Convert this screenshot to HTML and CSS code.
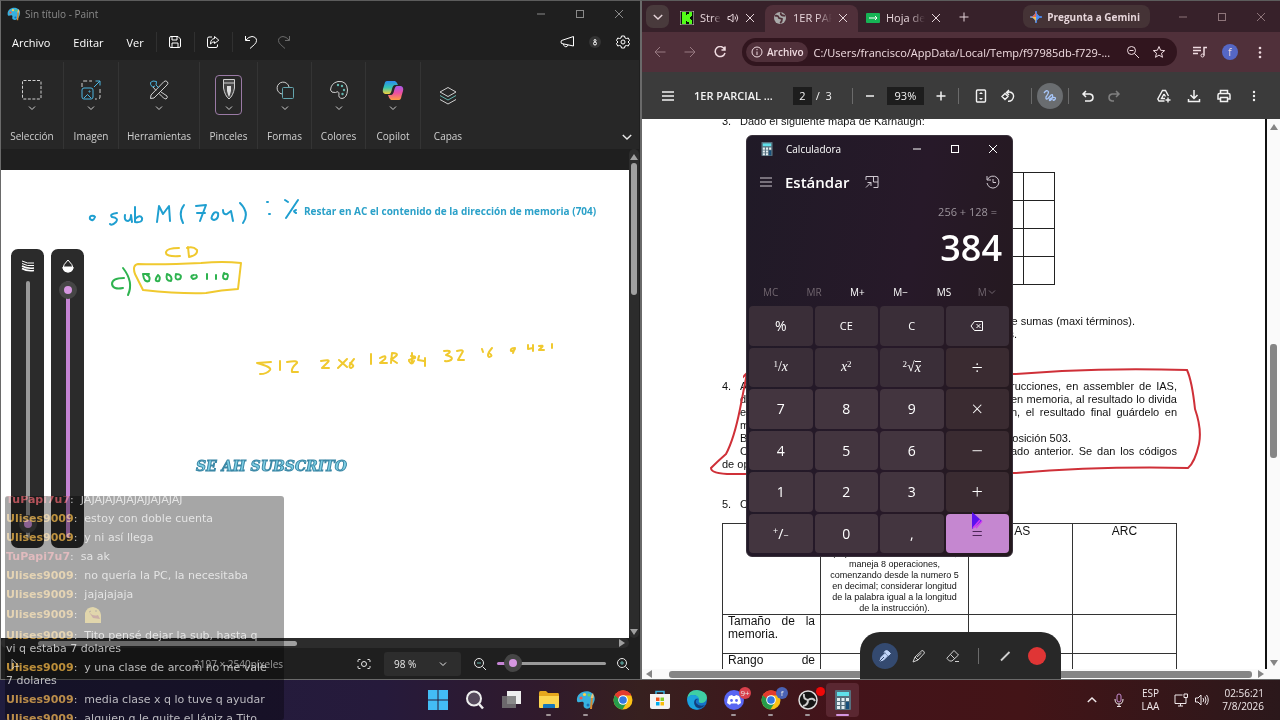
FILE: index.html
```html
<!DOCTYPE html>
<html lang="es">

<head>
  <meta charset="UTF-8" />
  <meta name="viewport" content="width=device-width, initial-scale=1.0" />
  <title>Escritorio</title>
  <link rel="stylesheet" href="styles.css">
</head>

<body>

  <!-- shared icons -->
  <svg class="defs" aria-hidden="true">
    <symbol id="chev" viewBox="0 0 10 10"><path d="M2 3.5 5 6.5 8 3.5" /></symbol>
    <symbol id="min" viewBox="0 0 10 10"><path d="M1 5H9" /></symbol>
    <symbol id="max" viewBox="0 0 10 10"><rect x="1.5" y="1.5" width="7" height="7" /></symbol>
    <symbol id="close" viewBox="0 0 10 10"><path d="M1 1 9 9M9 1 1 9" /></symbol>
    <symbol id="menu" viewBox="0 0 14 14"><path d="M1 3H13M1 7H13M1 11H13" /></symbol>
    <symbol id="palette" viewBox="0 0 20 20">
      <path d="M1 11C0 4 7 0 13 1.500 18 3 20 8 18 12 16 17 12 20 9 18 6 16 9 13 7 12 5 11 2 14 1 11Z" fill="#37b1df" />
      <circle cx="5" cy="8" r="1.600" fill="#f05a4a" /><circle cx="8.500" cy="4.500" r="1.600" fill="#ffd04a" />
      <circle cx="13" cy="5" r="1.600" fill="#5fd06c" /><circle cx="12" cy="15" r="1.500" fill="#1b6fb5" />
      <path d="M15 7 14 19 16 19 17 7Z" fill="#d98a32" /><path d="M14.500 8Q15.500 4 17 3 18 6 17.500 8Z" fill="#e9c27a" />
    </symbol>
    <symbol id="chrome" viewBox="0 0 20 20">
      <circle cx="10" cy="10" r="9.500" fill="#fbc116" />
      <path d="M10 10 1.800 5.200A9.500 9.500 0 0 1 18.300 5.300H10Z" fill="#e33b2e" />
      <path d="M1.800 5.200A9.500 9.500 0 0 0 9.500 19.500L13.900 12.200 10 10Z" fill="#269b4a" />
      <path d="M1.800 5.200 6 12 10 6Z" fill="#269b4a" />
      <path d="M1.800 5.200A9.500 9.500 0 0 1 18.300 5.300H10A5 5 0 0 0 5.500 8.500Z" fill="#e33b2e" />
      <circle cx="10" cy="10" r="4.800" fill="#fff" /><circle cx="10" cy="10" r="3.800" fill="#3478e0" />
    </symbol>
    <symbol id="calc" viewBox="0 0 18 20">
      <rect x="1" width="16" height="20" rx="1" fill="#57707e" />
      <rect x="3" y="2" width="12" height="4" fill="#5fe0ea" />
      <path d="M3 8H6V11H3ZM7.500 8H10.500V11H7.500ZM12 8H15V11H12ZM3 12H6V15H3ZM7.500 12H10.500V15H7.500ZM3 16H6V19H3ZM7.500 16H10.500V19H7.500Z" fill="#e4eef2" />
      <path d="M12 12H15V19H12Z" fill="#17507c" />
    </symbol>
  </svg>

  <div class="windows">

    <!-- Paint -->
    <section class="paint">
      <header class="paint-title">
        <svg class="i14"><use href="#palette" /></svg>
        <span>Sin título - Paint</span>
        <div class="win-btns">
          <button aria-label="Minimizar"><svg class="i10"><use href="#min" /></svg></button>
          <button aria-label="Maximizar"><svg class="i10"><use href="#max" /></svg></button>
          <button aria-label="Cerrar"><svg class="i10"><use href="#close" /></svg></button>
        </div>
      </header>

      <nav class="paint-menu">
        <button>Archivo</button>
        <button>Editar</button>
        <button>Ver</button>
        <button class="tool" aria-label="Guardar"><svg class="i14" viewBox="0 0 14 14"><path d="M1.500 3Q1.500 1.500 3 1.500H10L12.500 4V11Q12.500 12.500 11 12.500H3Q1.500 12.500 1.500 11ZM4 1.500V5H9V1.500M4 12.500V8H10V12.500" /></svg></button>
        <button class="tool" aria-label="Compartir"><svg class="i14" viewBox="0 0 14 14"><path d="M6 2H3Q1.500 2 1.500 3.500V11Q1.500 12.500 3 12.500H10Q11.500 12.500 11.500 11V9.500M8.500 1.500 12.800 5.200 8.500 8.500V6.800Q6 6.800 4.500 9 4.500 4 8.500 3.500Z" /></svg></button>
        <button class="tool undo" aria-label="Deshacer"><svg class="i14" viewBox="0 0 14 14"><path d="M1.500 1V5.500H6M1.800 5.200Q5 1.500 8 1.500 12.500 2 12.500 5.500 12.500 7.500 10.500 9.500L6 13.500" /></svg></button>
        <button class="dim" aria-label="Rehacer"><svg class="i14" viewBox="0 0 14 14"><path d="M12.500 1V5.500H8M12.200 5.200Q9 1.500 6 1.500 1.500 2 1.500 5.500 1.500 7.500 3.500 9.500L8 13.500" /></svg></button>
        <div class="menu-right">
          <button aria-label="Comentarios"><svg class="i14" viewBox="0 0 14 14"><path d="M13.500 1.500V11L1.500 8.500Q.5 7 1.500 5.500ZM3.500 9Q4 12.500 7 11.500L8 10" /></svg></button>
          <button aria-label="Cuenta" class="account"><svg class="i10" viewBox="0 0 10 10"><circle cx="5" cy="3.500" r="1" /><circle cx="5" cy="6.500" r="1.500" /></svg></button>
          <button aria-label="Configuración"><svg class="i14" viewBox="0 0 14 14"><circle cx="7" cy="7" r="2" /><path d="M5.500 1H8.500L9 3 10.500 3.500 12.300 3 13.500 5.500 12 7 13.500 8.500 12.300 11 10.500 10.500 9 11 8.500 13H5.500L5 11 3.500 10.500 1.700 11 .5 8.500 2 7 .5 5.500 1.700 3 3.500 3.500 5 3Z" /></svg></button>
        </div>
      </nav>

      <div class="ribbon">
        <button class="group">
          <svg class="i24" viewBox="0 0 24 24"><rect x="2.500" y="2.500" width="18.500" height="18.500" rx="1" stroke-dasharray="3 1.500" /></svg>
          <svg class="i10"><use href="#chev" /></svg>
          <span>Selección</span>
        </button>
        <button class="group">
          <svg class="i24" viewBox="0 0 24 24"><path d="M3 9V5Q3 3 5 3H13M21 11V19Q21 21 19 21H16" stroke-dasharray="4 2" /><g stroke="#4cb5e0"><rect x="3" y="10" width="11" height="11" rx="2" /><path d="M5 20 8.500 16.500 12 20M15 9 21 3M16.500 3H21V7.500" /><circle cx="10.500" cy="13.500" r=".6" /></g></svg>
          <svg class="i10"><use href="#chev" /></svg>
          <span>Imagen</span>
        </button>
        <button class="group">
          <svg class="i24" viewBox="0 0 24 24"><path d="M17 3.500Q19 2 20.500 4 21.500 5.500 20 7L7 20 3.500 20.500 4 17ZM14 14 20 18Q21 20 19 21 17 21 12 15.500M9 12.500 6 9" /><path d="M3.500 4.500 6 3 9.500 3.500 9 7 12 10M3.500 4.500Q3 7 5.500 9L8 8" stroke="#4cb5e0" /></svg>
          <svg class="i10"><use href="#chev" /></svg>
          <span>Herramientas</span>
        </button>
        <button class="group brush">
          <span class="brush-box">
            <svg class="i24" viewBox="0 0 24 24"><path d="M6.500 1.500H17.500V10Q16 18 12 21 8 18 6.500 10Z" fill="#454545" /><path d="M6.500 5H17.500" /><path d="M10 8H14V13Q13 17 12 19 11 17 10 13Z" fill="#ddd" stroke="none" /></svg>
            <svg class="i10"><use href="#chev" /></svg>
          </span>
          <span>Pinceles</span>
        </button>
        <button class="group">
          <svg class="i24" viewBox="0 0 24 24"><path d="M9 16A6 6 0 1 1 16 9" /><rect x="9.500" y="9.500" width="11" height="11" rx="1" stroke="#63a5ae" /></svg>
          <svg class="i10"><use href="#chev" /></svg>
          <span>Formas</span>
        </button>
        <button class="group">
          <svg class="i24" viewBox="0 0 24 24"><path d="M3.500 12Q4 5 11 3.500 20 2.500 20.500 12 20 20 15 20.500 11 20 12 16 12 12.500 8.500 14.500 4 15 3.500 12Z" /><g fill="#63b5ae" stroke="none"><circle cx="11" cy="7" r="1.200" /><circle cx="15" cy="8" r="1.200" /><circle cx="17" cy="12" r="1.200" /><circle cx="15.500" cy="16" r="1.200" /></g></svg>
          <svg class="i10"><use href="#chev" /></svg>
          <span>Colores</span>
        </button>
        <button class="group">
          <svg class="i24" viewBox="0 0 24 24">
            <defs>
              <linearGradient id="cp1" x1="0" y1="0" x2="0" y2="1"><stop offset="0" stop-color="#2a8cf0" /><stop offset=".5" stop-color="#35c5b0" /><stop offset="1" stop-color="#f4d03a" /></linearGradient>
              <linearGradient id="cp2" x1="0" y1="0" x2="0" y2="1"><stop offset="0" stop-color="#a65ae8" /><stop offset=".5" stop-color="#ee4fa0" /><stop offset="1" stop-color="#ff9c42" /></linearGradient>
            </defs>
            <path d="M6 3H14Q16 4 17 7H14Q12 7 11 11 10 16 8 16H4Q1 15 2 11L3.500 6Q4 3 6 3Z" fill="url(#cp1)" stroke="none" />
            <path d="M18 22H10Q8 21 7 17H10Q12 17 13 13 14 8 16 8H20Q23 9 22 13L20.500 18Q20 22 18 22Z" fill="url(#cp2)" stroke="none" />
          </svg>
          <svg class="i10"><use href="#chev" /></svg>
          <span>Copilot</span>
        </button>
        <button class="group layers">
          <svg class="i24" viewBox="0 0 24 24"><path d="M12 3.500 20 8 12 12.500 4 8ZM4 15.500 12 20 20 15.500" /><path d="M4 11.500 12 16 20 11.500" stroke="#63b5ae" /></svg>
          <span>Capas</span>
        </button>
        <button class="ribbon-toggle" aria-label="Contraer"><svg class="i14"><use href="#chev" /></svg></button>
      </div>

      <div class="workspace">
        <div class="canvas">
          <!-- freehand ink -->
          <svg class="ink" viewBox="0 170 628 468" aria-label="Trazos a mano">
            <g stroke="#1f9fd0">
              <path d="M93 216Q88 215 89 219 92 222 94 217ZM116 213Q108 214 111 217 118 218 115 222 111 226 109 224M124 215Q123 221 127 221 130 220 130 215L131 222M134 207 134 222Q142 223 141 218 139 214 134 219M156 222 158 206 162 214 168 206 169 221M183 205Q177 213 182 223M195 206 205 205 199 221M196 213H204M213 213Q208 219 213 220 218 219 217 213 214 211 212 214M222 210Q222 215 226 214L230 211M230 211 232 221M239 203Q249 213 242 223M266 202H267M268 214H269M284 200 287 202M297 200 285 218M295 210Q291 211 295 213" />
            </g>
            <g stroke="#f0c92f">
              <path d="M178 248Q166 248 165 252 164 257 179 256M187 247 188 257Q197 255 196 250 192 246 186 248M137 264Q160 265 200 263 222 261 240 263L237 289Q220 290 205 293 180 294 142 290L134 274Q131 265 137 264Z" />
              <path d="M270 362 256 363Q271 367 269 370 266 374 259 374M279 361V370M286 362Q297 360 296 363 290 368 291 372H297M320 361Q330 359 327 362L321 368H328M338 360 346 367M346 359 337 368M353 359Q346 367 350 368 355 366 349 363M370 354V364M379 358Q386 354 384 359L379 363H386M390 363 391 353Q398 353 395 356 392 359 390 359L396 363M411 353 411 363M408 361Q411 366 413 361M410 356Q415 356 414 358L408 360M418 356 417 360 423 361M424 358V366M443 351Q451 350 448 353L445 355Q453 357 450 360 446 362 444 361M456 351Q464 349 461 353L457 360H463M481 349 482 352M491 348Q485 355 488 357 493 356 488 353M514 348Q509 348 510 351 514 351 514 348L512 353M527 345V349L532 348M532 345V351M538 346Q543 345 541 347L538 350H543M551 344V348" />
            </g>
            <path stroke="#2eb34f" d="M123 278Q111 278 111 284 112 290 122 288M122 268Q133 282 127 295M142 274H148M142 274Q143 283 148 281 150 277 146 275M157 275Q152 282 158 281 160 277 157 275M166 274Q164 281 170 281 172 276 166 274M175 274Q173 281 179 279 182 274 175 274M193 275Q188 276 192 279 198 278 195 275M206 274V279M215 275V279M223 273Q220 280 226 279 229 273 223 274Z" />
          </svg>
          <p class="note">Restar en AC el contenido de la dirección de memoria (704)</p>
          <p class="subscribed">SE AH SUBSCRITO</p>
          <div class="panel size">
            <svg class="i14" viewBox="0 0 14 14"><path d="M1 2Q6 5 13 4M1 4.500Q6 7.500 13 6.500" /><path d="M1 7Q6 10 13 9M1 9.500Q6 12.500 13 11.500" stroke-width="1.600" /></svg>
            <input type="range" aria-label="Tamaño" min="0" max="100" value="2">
          </div>
          <div class="panel opacity">
            <svg class="i14" viewBox="0 0 14 14"><path d="M7 1Q2 6 2 9 3 13 7 13 11 13 12 9 12 6 7 1Z" /><path d="M2 8H12Q12 13 7 13 2 13 2 8Z" fill="#fff" /></svg>
            <input type="range" aria-label="Opacidad" min="0" max="100" value="100">
          </div>
        </div>
        <div class="vbar dark"><i class="up"></i><b></b><i class="down"></i></div>
      </div>
      <div class="hbar dark"><b></b><i class="right"></i></div>

      <footer class="status">
        <svg class="i14 pointer" viewBox="0 0 14 14"><path d="M4 2V12L6.500 9.500H11Z" /></svg>
        <span class="dims">2197 × 2540píxeles</span>
        <button aria-label="Ajustar a la ventana"><svg class="i14" viewBox="0 0 14 14"><circle cx="7" cy="7" r="2.500" /><path d="M1 5V3.500Q1 2.500 2 2.500H3.500M10.500 2.500H12Q13 2.500 13 3.500V5M13 9V10.500Q13 11.500 12 11.500H10.500M3.500 11.500H2Q1 11.500 1 10.500V9" /></svg></button>
        <label class="zoom-pick"><select aria-label="Zoom"><option>98 %</option></select><svg class="i10"><use href="#chev" /></svg></label>
        <button aria-label="Alejar"><svg class="i14" viewBox="0 0 14 14"><circle cx="6" cy="6" r="4.500" /><path d="M9.500 9.500 13 13" /><path d="M4 6H8" stroke="#63b5ae" /></svg></button>
        <input class="zoom" type="range" aria-label="Nivel de zoom" min="0" max="100" value="8">
        <button aria-label="Acercar"><svg class="i14" viewBox="0 0 14 14"><circle cx="6" cy="6" r="4.500" /><path d="M9.500 9.500 13 13" /><path d="M4 6H8M6 4V8" stroke="#63b5ae" /></svg></button>
      </footer>
    </section>

    <!-- Chrome -->
    <section class="browser">
      <header class="tabs">
        <button class="tab-search" aria-label="Buscar pestañas"><svg class="i14"><use href="#chev" /></svg></button>
        <div class="tab">
          <svg class="i14" viewBox="0 0 14 14"><rect width="14" height="14" fill="#061006" /><path d="M2 1H6V4H7V3H9V1H12V5H11V6H10V8H11V9H12V13H9V11H7V10H6V13H2Z" fill="#53fc18" stroke="none" /></svg>
          <span>Stre</span>
          <svg class="i12" viewBox="0 0 12 12"><path d="M1 4.500H3L6 2V10L3 7.500H1ZM8 4.500Q9 6 8 7.500M9.500 2.500Q12 6 9.500 9.500" /></svg>
          <button aria-label="Cerrar pestaña"><svg class="i10"><use href="#close" /></svg></button>
        </div>
        <div class="tab active">
          <svg class="i14" viewBox="0 0 14 14"><circle cx="7" cy="7" r="6" fill="#aaa" stroke="none" /><path d="M2 5Q5 4 6 7L9 8Q9 11 7 12M8 1.500Q7 4 10 4.500L12 5" stroke="#4f2f37" stroke-width="1.800" /></svg>
          <span>1ER PAR</span>
          <button aria-label="Cerrar pestaña"><svg class="i10"><use href="#close" /></svg></button>
        </div>
        <div class="tab">
          <svg class="i14" viewBox="0 0 14 14"><rect y="2" width="14" height="10" rx="1" fill="#16b455" stroke="none" /><path d="M3 7H11M9 5 11 7 9 9" stroke="#fff" /></svg>
          <span>Hoja de</span>
          <button aria-label="Cerrar pestaña"><svg class="i10"><use href="#close" /></svg></button>
        </div>
        <button class="new-tab" aria-label="Nueva pestaña"><svg class="i10" viewBox="0 0 10 10"><path d="M5 .5V9.500M.5 5H9.500" /></svg></button>
        <button class="gemini"><svg class="i14" viewBox="0 0 14 14"><path d="M7 1Q7.500 6.500 13 7 7.500 7.500 7 13 6.500 7.500 1 7 6.500 6.500 7 1Z" fill="#4c8df6" stroke="#4c8df6" /><path d="M7 1Q7.300 6 7 7H1Q6.500 6.500 7 1Z" fill="#ed6a4e" stroke="none" /><path d="M1 7H7V13Q6.500 7.500 1 7Z" fill="#f2c14e" stroke="none" /></svg>Pregunta a Gemini</button>
        <div class="win-btns">
          <button aria-label="Minimizar"><svg class="i10"><use href="#min" /></svg></button>
          <button aria-label="Maximizar"><svg class="i10"><use href="#max" /></svg></button>
          <button aria-label="Cerrar"><svg class="i10"><use href="#close" /></svg></button>
        </div>
      </header>

      <div class="address">
        <button class="dim" aria-label="Atrás"><svg class="i12" viewBox="0 0 12 12"><path d="M11.500 6H1M6 1 1 6 6 11" /></svg></button>
        <button class="dim" aria-label="Adelante"><svg class="i12" viewBox="0 0 12 12"><path d="M.5 6H11M6 1 11 6 6 11" /></svg></button>
        <button aria-label="Recargar"><svg class="i12" viewBox="0 0 12 12"><path d="M10.500 3A5 5 0 1 0 11 7M11 .5V4H7.500" stroke-width="1.500" /></svg></button>
        <div class="omnibox">
          <button class="chip"><svg class="i12" viewBox="0 0 12 12"><circle cx="6" cy="6" r="5" /><path d="M6 5.500V9M6 3V4.200" /></svg>Archivo</button>
          <input type="text" aria-label="Dirección" value="C:/Users/francisco/AppData/Local/Temp/f97985db-f729-...">
          <button aria-label="Zoom"><svg class="i14" viewBox="0 0 14 14"><circle cx="5.500" cy="5.500" r="4" /><path d="M8.500 8.500 13 13M3.500 5.500H7.500" /></svg></button>
          <button class="star" aria-label="Favorito"><svg class="i14" viewBox="0 0 14 14"><path d="M7 1.500 8.600 5.300 12.700 5.600 9.500 8.200 10.500 12.300 7 10.100 3.500 12.300 4.500 8.200 1.300 5.600 5.400 5.300Z" /></svg></button>
        </div>
        <button aria-label="Medios"><svg class="i14" viewBox="0 0 14 14"><path d="M0 2.500H8M0 5.500H8M0 8.500H5M11 10.500V2.500H14" stroke-width="1.500" /><circle cx="9.500" cy="10.500" r="1.500" /></svg></button>
        <button class="avatar">f</button>
        <button aria-label="Más"><svg class="i14 dots" viewBox="0 0 14 14"><circle cx="7" cy="3" r="1.300" /><circle cx="7" cy="7.500" r="1.300" /><circle cx="7" cy="12" r="1.300" /></svg></button>
      </div>

      <div class="pdf-bar">
        <button aria-label="Menú"><svg class="i14 bold"><use href="#menu" /></svg></button>
        <strong>1ER PARCIAL ...</strong>
        <input class="page-no" type="text" aria-label="Página" value="2">
        <span class="pages">/&nbsp; 3</span>
        <i class="sep"></i>
        <button aria-label="Reducir"><svg class="i10 bold"><use href="#min" /></svg></button>
        <input class="pct" type="text" aria-label="Zoom" value="93%">
        <button aria-label="Ampliar"><svg class="i10 bold" viewBox="0 0 10 10"><path d="M5 .5V9.500M.5 5H9.500" /></svg></button>
        <i class="sep"></i>
        <button class="fit" aria-label="Ajustar"><svg class="i14" viewBox="0 0 14 14"><rect x="2.500" y="1" width="9" height="12" rx="1" stroke-width="1.400" /><path d="M5 5 7 3 9 5ZM5 9 7 11 9 9Z" fill="#f2f2f2" stroke="none" /></svg></button>
        <button class="rotate" aria-label="Girar"><svg class="i14" viewBox="0 0 14 14"><path d="M4 4.500 7 7.500 4 10.500 1 7.500ZM6 3.500Q10 2 12 5 13.500 8 11 11 9.500 12.500 7 12.300M8 1 5.500 3.500 8 6" stroke-width="1.400" /></svg></button>
        <i class="sep"></i>
        <button class="draw" aria-label="Dibujar"><svg class="i14" viewBox="0 0 14 14"><path d="M1 4Q4 0 5.500 3 5.500 5 3 8 2.500 11 5 9.500L8 6Q10 4.500 9.500 8 8 12 6.500 11.500 6 9.500 10 8.500 13.500 8 12 10.500 10 12.500 10 10" stroke="#a8c7fa" stroke-width="1.300" /></svg></button>
        <i class="sep"></i>
        <button class="u" aria-label="Deshacer"><svg class="i14" viewBox="0 0 14 14"><path d="M5 2 2 5 5 8M2 5H9Q12 5.500 12 8.500 12 11.500 9 12H4" stroke-width="1.500" /></svg></button>
        <button class="dim" aria-label="Rehacer"><svg class="i14" viewBox="0 0 14 14"><path d="M9 2 12 5 9 8M12 5H5Q2 5.500 2 8.500 2 11.500 5 12H7" stroke-width="1.500" /></svg></button>
        <div class="pdf-right">
          <button aria-label="Guardar en Drive"><svg class="i14" viewBox="0 0 14 14"><path d="M7.500 12H2L.8 10 5.500 1.500H8.500L11.500 7M7 5 4.500 9.500H8M7 5 8.500 7.500M11 8.500V13.500M8.500 11H13.500" stroke-width="1.400" /></svg></button>
          <button aria-label="Descargar"><svg class="i14" viewBox="0 0 14 14"><path d="M7 1V9M3.500 6 7 9.500 10.500 6M1.500 10V12.500H12.500V10" stroke-width="1.500" /></svg></button>
          <button aria-label="Imprimir"><svg class="i14" viewBox="0 0 14 14"><path d="M3.500 4.500V1.500H10.500V4.500M3.500 10H1V6Q1 4.500 2.500 4.500H11.500Q13 4.500 13 6V10H10.500M3.500 8.500H10.500V12.500H3.500Z" stroke-width="1.500" /></svg></button>
          <button aria-label="Más"><svg class="i14 dots" viewBox="0 0 14 14"><circle cx="7" cy="3" r="1.200" /><circle cx="7" cy="7" r="1.200" /><circle cx="7" cy="11" r="1.200" /></svg></button>
        </div>
      </div>

      <div class="viewer">
        <div class="page">
          <p class="line"><b>3.</b><span>Dado el siguiente mapa de Karnaugh:</span></p>
          <table class="karnaugh">
            <tr><td></td><td></td><td></td><td></td><td></td></tr>
            <tr><td></td><td></td><td></td><td></td><td></td></tr>
            <tr><td></td><td></td><td></td><td></td><td></td></tr>
            <tr><td></td><td></td><td></td><td></td><td></td></tr>
          </table>
          <div class="sums">
            <p class="line"><em>e sumas (maxi términos).</em></p>
            <p class="line"><em class="short">s.</em></p>
          </div>
          <div class="question">
            <p class="line"><b>4.</b><span>A</span><em class="full">rucciones, en assembler de IAS,</em></p>
            <p class="line"><b></b><span>d</span><em class="full">en memoria, al resultado lo divida</em></p>
            <p class="line"><b></b><span>e</span><em class="full">n, el resultado final guárdelo en</em></p>
            <p class="line"><b></b><span>m</span></p>
            <p class="line"><b></b><span>B</span><em class="mid">osición 503.</em></p>
            <p class="line"><b></b><span>C</span><em class="full">ado anterior. Se dan los códigos</em></p>
            <p class="line">de op</p>
          </div>
          <p class="line q5"><b>5.</b><span>C</span></p>
          <table class="compare">
            <colgroup><col class="c1"><col class="c2"><col class="c3"><col class="c3"></colgroup>
            <tr class="head">
              <td></td>
              <td class="spec">(capacidad de memoria 32 GB,<br>maneja 8 operaciones,<br>comenzando desde la numero 5<br>en decimal; considerar longitud<br>de la palabra igual a la longitud<br>de la instrucción).</td>
              <td>IAS</td>
              <td>ARC</td>
            </tr>
            <tr class="mem"><th>Tamaño de la<br>memoria.</th><td></td><td></td><td></td></tr>
            <tr class="mem"><th>Rango de</th><td></td><td></td><td></td></tr>
          </table>
          <svg class="mark" viewBox="0 0 624 550"><path d="M140 255Q102 255 102 257L105 254 98 290Q92 320 84 335 76 342 69 349 69 355 90 355L150 355M320 255 374 255 420 252Q480 249 545 251 550 262 553 290 560 310 557 325 553 343 546 349 460 347 374 354H320" /></svg>
        </div>
        <div class="vbar light"><i class="up"></i><b></b><i class="down"></i></div>
      </div>
      <div class="hbar light"><i class="left"></i><b></b><i class="right"></i></div>

      <div class="annot">
        <button class="on" aria-label="Lápiz"><svg class="i14" viewBox="0 0 14 14"><path d="M2 12 3 8.500 7 4.500 9.500 7 5.500 11ZM6 3.500Q8 0 11 3L12.500 4.500 10.500 6.500 7.500 3.500" fill="#c3d7fb" stroke="#c3d7fb" /><path d="M2 12 6 8" stroke="#344a70" /></svg></button>
        <button aria-label="Resaltador"><svg class="i14" viewBox="0 0 14 14"><path d="M1 13 3 8 10 1.500Q12 1.500 12.500 4L6 11ZM3 8 6 11M5 8 9.500 4" /></svg></button>
        <button aria-label="Borrador"><svg class="i14" viewBox="0 0 14 14"><path d="M1 9 8 1.500 12.500 6 6 12H3.500L1 9.500ZM4.500 5.500 9 10M9 12.500H13" /></svg></button>
        <i class="sep"></i>
        <button aria-label="Grosor"><svg class="i14" viewBox="0 0 14 14"><path d="M3 11.500 11.500 3" stroke-width="1.800" /></svg></button>
        <button class="red" aria-label="Color"></button>
      </div>
    </section>
  </div>

  <!-- Calculator -->
  <section class="calculator">
    <header>
      <svg class="i14"><use href="#calc" /></svg>
      <span>Calculadora</span>
      <div class="win-btns">
        <button aria-label="Minimizar"><svg class="i10"><use href="#min" /></svg></button>
        <button aria-label="Maximizar"><svg class="i10"><use href="#max" /></svg></button>
        <button aria-label="Cerrar"><svg class="i10"><use href="#close" /></svg></button>
      </div>
    </header>
    <div class="mode">
      <button aria-label="Menú"><svg class="i14"><use href="#menu" /></svg></button>
      <h1>Estándar</h1>
      <button class="pin" aria-label="Mantener arriba"><svg class="i14" viewBox="0 0 14 14"><path d="M1 5V1.500H13V12.500H8.500M8.500 1.500V7H13M1 12.500 6 7.500M2.500 7.500H6V11" /></svg></button>
      <button class="history" aria-label="Historial"><svg class="i14" viewBox="0 0 14 14"><path d="M1 1V5H5M1.500 4.500A6 6 0 1 1 1 8M7 4V7.500H10" /></svg></button>
    </div>
    <p class="expr">256 + 128 =</p>
    <output>384</output>
    <div class="memory">
      <button class="off">MC</button><button class="off">MR</button><button>M+</button><button>M−</button><button>MS</button><button class="off">M<svg class="i10"><use href="#chev" /></svg></button>
    </div>
    <div class="keys">
      <button>%</button><button class="small">CE</button><button class="small">C</button><button aria-label="Borrar"><svg class="i14" viewBox="0 0 14 14"><path d="M4.500 2.500H12.500V11.500H4.500L1 7ZM6.500 5 10.500 9M10.500 5 6.500 9" /></svg></button>
      <button class="math"><sup>1</sup>/<i>x</i></button><button class="math"><i>x</i><sup>2</sup></button><button class="math"><sup>2</sup>√<i class="root">x</i></button><button class="sign">÷</button>
      <button class="num">7</button><button class="num">8</button><button class="num">9</button><button class="sign">×</button>
      <button class="num">4</button><button class="num">5</button><button class="num">6</button><button class="sign">−</button>
      <button class="num">1</button><button class="num">2</button><button class="num">3</button><button class="sign">+</button>
      <button class="num pm"><sup>+</sup>/<sub>−</sub></button><button class="num">0</button><button class="num">,</button><button class="sign equals">=</button>
    </div>
    <svg class="cursor" viewBox="0 0 12 18"><path d="M1 0 11 9 1 17Z" fill="#5a12f0" /><path d="M2 16 9 8M5 16 11 9" stroke="#d03bf0" stroke-width="1.500" /></svg>
  </section>

  <footer class="taskbar">
    <nav class="apps">
      <button aria-label="Inicio"><svg class="i20" viewBox="0 0 20 20"><path d="M0 0H9.500V9.500H0ZM10.500 0H20V9.500H10.500ZM0 10.500H9.500V20H0ZM10.500 10.500H20V20H10.500Z" fill="#43bdf5" /></svg></button>
      <button aria-label="Buscar"><svg class="i20" viewBox="0 0 20 20"><circle cx="9" cy="8.500" r="7" fill="#564a5c" stroke="#eee" stroke-width="2" /><path d="M14 14 18 18.500" stroke="#eee" stroke-width="2.500" /></svg></button>
      <button aria-label="Vista de tareas"><svg class="i20" viewBox="0 0 20 20"><path d="M5 1H19V14H5Z" fill="#eee" /><path d="M0 6H14V18H0Z" fill="#777" opacity=".85" /></svg></button>
      <button class="open" aria-label="Explorador"><svg class="i20" viewBox="0 0 20 20"><path d="M0 3Q0 1 1.500 1H7L9 3H19Q20 3 20 5V16H0Z" fill="#e5a71d" /><path d="M0 6H20V17Q20 18 19 18H1Q0 18 0 17Z" fill="#fbd651" /><path d="M4 18V15Q4 14 5 14H15Q16 14 16 15V18Z" fill="#1477bd" /></svg></button>
      <button class="open" aria-label="Paint"><svg class="i20"><use href="#palette" /></svg></button>
      <button aria-label="Chrome"><svg class="i20"><use href="#chrome" /></svg></button>
      <button aria-label="Store"><svg class="i20" viewBox="0 0 20 20"><path d="M6 5V1.500H14V5" fill="none" stroke="#37b1df" stroke-width="1.500" /><path d="M0 4H20V17Q20 19 18 19H2Q0 19 0 17Z" fill="#f3f3f3" /><path d="M6 7.500H9.500V11H6Z" fill="#f1511b" /><path d="M10.500 7.500H14V11H10.500Z" fill="#80cc28" /><path d="M6 12H9.500V15.500H6Z" fill="#00adef" /><path d="M10.500 12H14V15.500H10.500Z" fill="#fbbc09" /></svg></button>
      <button aria-label="Edge"><svg class="i20" viewBox="0 0 20 20"><circle cx="10" cy="10" r="10" fill="#1673c8" /><path d="M0 9Q1 0 10 0 20 1 20 8 19 13 14 13 11 13 12 10 11 5 6 5 2 5 0 9Z" fill="#3fcfa4" /><path d="M0 9Q2 5 6 5 11 5 12 9 7 7 7 13 8 18 13 19 3 21 1 13Z" fill="#1ca3dd" /><path d="M12 9Q8 9 9 13 12 17 18 15 14 20 9 17 6 13 8 10 10 8 12 9Z" fill="#123f7a" /></svg></button>
      <button class="open" aria-label="Discord"><svg class="i20" viewBox="0 0 20 20"><circle cx="10" cy="10" r="10" fill="#5865f2" /><path d="M5 6 8 5 9 6H11L12 5 15 6Q17 9 17 13L14 15 13 13.500H7L6 15 3 13Q3 9 5 6Z" fill="#fff" /><circle cx="7.500" cy="10.500" r="1.400" fill="#5865f2" /><circle cx="12.500" cy="10.500" r="1.400" fill="#5865f2" /></svg><span class="badge">9+</span></button>
      <button class="open" aria-label="Chrome, perfil f"><svg class="i20"><use href="#chrome" /></svg><span class="badge blue">f</span></button>
      <button class="open" aria-label="OBS"><svg class="i20" viewBox="0 0 20 20"><circle cx="10" cy="10" r="9" fill="#161616" stroke="#ddd" stroke-width="1.500" /><path d="M10 10Q5 9 6 4M10 10Q15 7 17 11M10 10Q10 15 5 16" fill="none" stroke="#ccc" stroke-width="2" /></svg><span class="badge rec"></span></button>
      <button class="open current" aria-label="Calculadora"><svg class="i20"><use href="#calc" /></svg></button>
    </nav>
    <div class="tray">
      <svg class="i14 up-chev"><use href="#chev" /></svg>
      <svg class="i14 mic" viewBox="0 0 14 14"><rect x="5" y="1" width="4" height="8" rx="2" stroke="#c58bd0" /><path d="M3 6Q3 11 7 11 11 11 11 6M7 11V13.500M5 13.500H9" /></svg>
      <span class="lang">ESP<br>LAA</span>
      <svg class="i14 net" viewBox="0 0 14 14"><path d="M8.500 2H1V10.500H12V8M4 13H9M6.500 10.500V13M10 1H13.500V4.500H10ZM12 4.500V8" /></svg>
      <svg class="i14" viewBox="0 0 14 14"><path d="M.5 5H3L6 2V12L3 9H.5ZM8 5Q9.500 7 8 9M10 3.500Q12 7 10 10.500M11.500 2Q15 7 11.500 12" /></svg>
      <time>02:56:21<br>7/8/2026</time>
    </div>
  </footer>

  <!-- stream chat overlay -->
  <aside class="chat">
    <ul>
      <li class="red"><b>TuPapi7u7</b>: &nbsp;JAJAJAJAJAJAJJAJAJAJ</li>
      <li><b>Ulises9009</b>: &nbsp;estoy con doble cuenta</li>
      <li><b>Ulises9009</b>: &nbsp;y ni así llega</li>
      <li class="red"><b>TuPapi7u7</b>: &nbsp;sa ak</li>
      <li><b>Ulises9009</b>: &nbsp;no quería la PC, la necesitaba</li>
      <li><b>Ulises9009</b>: &nbsp;jajajajaja</li>
      <li class="emote"><b>Ulises9009</b>: &nbsp;<svg viewBox="0 0 18 16"><path d="M1 16V6Q3 0 9 0 16 1 17 8V16Z" fill="#a88a10" /><path d="M5 5Q9 10 14 8L16 12 9 11Z" fill="#6a1a08" /><path d="M5 5 7 4M11 4H13" stroke="#3a2000" /></svg></li>
      <li><b>Ulises9009</b>: &nbsp;Tito pensé dejar la sub, hasta q<br>vi q estaba 7 dolares</li>
      <li><b>Ulises9009</b>: &nbsp;y una clase de arcom no me vale<br>7 dolares</li>
      <li><b>Ulises9009</b>: &nbsp;media clase x q lo tuve q ayudar</li>
      <li><b>Ulises9009</b>: &nbsp;alguien q le quite el lápiz a Tito</li>
    </ul>
  </aside>

</body>

</html>
```
FILE: styles.css
```css
* {
  box-sizing: border-box;
}

body {
  margin: 0;
  height: 100vh;
  display: flex;
  flex-direction: column;
  overflow: hidden;
  position: relative;
  font-family: "Open Sans", "Noto Sans", sans-serif;
  font-size: 10px;
  color: #e8e8e8;
  background: #1c1c1c;
}

p,
h1,
ul {
  margin: 0;
  padding: 0;
}

button,
input,
select {
  font: inherit;
  color: inherit;
  background: none;
  border: none;
  padding: 0;
  margin: 0;
}

button {
  display: flex;
  align-items: center;
  justify-content: center;
}

svg {
  display: block;
  flex: none;
  fill: none;
  stroke: currentColor;
}

.defs {
  position: absolute;
  width: 0;
  height: 0;
}

.defs symbol [fill],
.apps svg {
  stroke: none;
}

.i10 {
  width: 10px;
  height: 10px;
}

.i12 {
  width: 12px;
  height: 12px;
}

.i14 {
  width: 14px;
  height: 14px;
}

.i20 {
  width: 20px;
  height: 20px;
}

.i24 {
  width: 24px;
  height: 24px;
}

.bold {
  stroke-width: 1.5;
}

.dots {
  fill: currentColor;
  stroke: none;
}

.dim {
  color: #808080;
}

.sep {
  width: 1px;
  height: 16px;
  background: #6b6b6b;
}

.win-btns {
  display: flex;
  margin-left: auto;
}

.win-btns button {
  width: 39px;
  height: 24px;
}

.windows {
  flex: 1;
  min-height: 0;
  display: grid;
  grid-template-columns: 1fr 1fr;
}

/* ---------- Paint ---------- */
.paint,
.browser {
  display: flex;
  flex-direction: column;
  min-width: 0;
  min-height: 0;
  position: relative;
  border-top: 1px solid #5c5c5c;
  border-bottom: 1px solid #6a6a6a;
  overflow: hidden;
}

.paint {
  background: #1f1f1f;
  border-left: 1px solid #6a6a6a;
  padding-right: 1px;
}

.paint-title {
  height: 25px;
  display: flex;
  align-items: center;
  gap: 4px;
  padding: 0 1px 0 6px;
  color: #8a8a8a;
}

.paint-menu {
  height: 34px;
  display: flex;
  align-items: center;
  padding-bottom: 2px;
  font-size: 11px;
  color: #fff;
}

.paint-menu > button {
  padding: 0 12px 0 11px;
  height: 20px;
}

.paint-menu .tool {
  border-left: 1px solid #303030;
}

.paint-menu .dim {
  color: #6a6a6a;
  padding-left: 7px;
}

.menu-right {
  display: flex;
  align-items: center;
  gap: 15px;
  margin-left: auto;
  padding-right: 9px;
}

.account {
  width: 12px;
  height: 12px;
  border-radius: 50%;
  background: #343434;
}

.ribbon {
  height: 89px;
  flex: none;
  display: grid;
  grid-template-columns: 63px 55px 81px 58px 54px 54px 55px 54px 1fr;
  padding-top: 2px;
  background: #272727;
}

.group {
  flex-direction: column;
  justify-content: flex-start;
  padding-top: 16px;
  color: #d0d0d0;
  border-right: 1px solid #343434;
}

.group > span:last-child {
  margin-top: auto;
  line-height: 16px;
  margin-bottom: 5px;
}

.group svg + svg {
  margin-top: 1px;
}

.brush {
  padding-top: 13px;
}

.brush-box {
  border: 1px solid #9a7aa5;
  border-radius: 4px;
  height: 40px;
  width: 27px;
  padding-top: 2px;
  display: flex;
  flex-direction: column;
  align-items: center;
}

.layers {
  border: none;
  padding-top: 22px;
}

.ribbon-toggle {
  align-self: end;
  justify-self: end;
  margin: 0 5px 5px 0;
}

.workspace {
  flex: 1;
  min-height: 0;
  display: flex;
}

.canvas {
  flex: 1;
  margin-top: 21px;
  background: #fff;
  position: relative;
}

.ink {
  position: absolute;
  left: 0;
  top: 0;
  width: 628px;
  height: 468px;
  stroke-width: 2;
  stroke-linecap: round;
  stroke-linejoin: round;
}

.note {
  position: absolute;
  left: 303px;
  top: 34px;
  line-height: 14px;
  font-weight: bold;
  color: #2ba1c9;
  white-space: nowrap;
}

.subscribed {
  position: absolute;
  left: 195px;
  top: 286px;
  font: italic bold 14px/20px "DejaVu Serif", serif;
  color: #7fcfe4;
  -webkit-text-stroke: 1px #3a87a5;
  white-space: nowrap;
}

.panel {
  position: absolute;
  top: 79px;
  width: 33px;
  height: 299px;
  border-radius: 7px;
  background: #2b2b2b;
  display: flex;
  flex-direction: column;
  align-items: center;
  padding: 10px 0;
  gap: 8px;
  color: #fff;
}

.size {
  left: 10px;
}

.opacity {
  left: 50px;
}

.panel input {
  appearance: none;
  writing-mode: vertical-lr;
  direction: rtl;
  width: 18px;
  height: 257px;
}

.panel input::-webkit-slider-runnable-track {
  width: 4px;
  height: 100%;
  border-radius: 2px;
  background: #9a9a9a;
}

.opacity input::-webkit-slider-runnable-track {
  background: #c584d4;
}

input::-webkit-slider-thumb {
  appearance: none;
  width: 18px;
  height: 18px;
  border-radius: 50%;
  border: 5px solid #454545;
  background: #d596e0;
}

.panel input::-webkit-slider-thumb {
  margin-left: -7px;
}

/* scroll bars */
.vbar,
.hbar {
  flex: none;
  display: flex;
  align-items: center;
}

.vbar {
  flex-direction: column;
  width: 10px;
  padding: 5px 0 3px;
}

.hbar {
  height: 10px;
  padding: 0 4px;
}

.dark {
  background: #2c2c2c;
  border-radius: 5px;
  color: #a0a0a0;
}

.light {
  background: #fafafa;
  color: #858585;
}

.vbar b,
.hbar b {
  background: currentColor;
  border-radius: 3px;
}

.up,
.down {
  border-left: 4px solid transparent;
  border-right: 4px solid transparent;
}

.up {
  border-bottom: 6px solid;
}

.down {
  border-top: 6px solid;
  margin-top: auto;
}

.left,
.right {
  border-top: 4px solid transparent;
  border-bottom: 4px solid transparent;
}

.left {
  border-right: 6px solid;
}

.right {
  border-left: 6px solid;
  margin-left: auto;
}

.vbar.dark b {
  width: 6px;
  height: 132px;
  margin-top: 3px;
}

.hbar.dark {
  margin-right: 10px;
}

.hbar.dark b {
  height: 5px;
  width: 259px;
  margin-left: 33px;
}

.vbar.light {
  width: 13px;
}

.vbar.light b {
  width: 7px;
  height: 114px;
  margin-top: 214px;
}

.hbar.light {
  padding-right: 16px;
}

.hbar.light b {
  flex: 1;
  height: 7px;
  margin: 0 6px 0 17px;
}

.status {
  height: 31px;
  flex: none;
  display: flex;
  align-items: center;
  padding: 0 9px 0 7px;
}

.dims {
  margin: 0 74px 0 172px;
  white-space: nowrap;
}

.zoom-pick {
  width: 77px;
  height: 24px;
  margin: 0 12px 0 13px;
  padding: 0 13px 0 10px;
  display: flex;
  align-items: center;
  background: #2d2d2d;
  border-radius: 3px;
}

.zoom-pick select {
  flex: 1;
  appearance: none;
}

.zoom {
  appearance: none;
  flex: 1;
  margin: 0 10px;
  min-width: 0;
  height: 18px;
}

.zoom::-webkit-slider-runnable-track {
  height: 3px;
  border-radius: 2px;
  background: linear-gradient(to right, #c584d4 10%, #9a9a9a 10%);
}

.zoom::-webkit-slider-thumb {
  margin-top: -8px;
}

/* ---------- Chrome ---------- */
.browser {
  border-left: 2px solid #6a6a6a;
  background: #50303a;
}

.tabs {
  height: 31px;
  flex: none;
  display: flex;
  align-items: center;
  padding: 0 0 0 4px;
  background: #37212a;
  color: #e6d5da;
}

.tab-search {
  width: 23px;
  height: 23px;
  border-radius: 7px;
  background: #493a3c;
  margin-right: 3px;
}

.tab {
  width: 93px;
  height: 27px;
  align-self: flex-end;
  display: flex;
  align-items: center;
  gap: 6px;
  padding: 0 10px 2px 8px;
}

.tab span {
  flex: 1;
  min-width: 0;
  overflow: hidden;
  white-space: nowrap;
  font-size: 11px;
  mask-image: linear-gradient(to right, #000 60%, transparent);
}

.tab.active {
  background: #50303a;
  border-radius: 8px 8px 0 0;
}

.new-tab {
  margin-left: 8px;
  margin-right: auto;
}

.gemini {
  height: 23px;
  padding: 0 10px 0 6px;
  gap: 4px;
  border-radius: 8px;
  background: #453336;
  font-weight: bold;
  white-space: nowrap;
}

.tabs .win-btns {
  margin-left: 13px;
  color: #8d7479;
}

.address {
  height: 40px;
  flex: none;
  display: flex;
  align-items: center;
  padding: 0 13px 0 12px;
  gap: 18px;
  color: #f0dce1;
}

.address .dim {
  color: #987a82;
}

.omnibox {
  flex: 1;
  min-width: 0;
  height: 28px;
  display: flex;
  align-items: center;
  gap: 10px;
  padding: 0 11px 0 4px;
  margin: 0 -2px;
  border-radius: 14px;
  background: #31151e;
}

.omnibox input {
  flex: 1;
  min-width: 0;
  font-size: 11px;
  margin-left: -5px;
}

.omnibox .star {
  margin-left: 2px;
}

.chip {
  height: 20px;
  padding: 0 5px;
  gap: 4px;
  border-radius: 10px;
  background: #50303a;
  font-weight: 600;
}

.avatar {
  width: 16px;
  height: 16px;
  border-radius: 50%;
  background: #5567c5;
  margin: 0 -3px;
}

.pdf-bar {
  height: 47px;
  flex: none;
  display: flex;
  align-items: center;
  padding: 0 19px;
  background: #3b3b3b;
  color: #f2f2f2;
  font-size: 11px;
}

.pdf-bar strong {
  font-weight: 600;
  margin: 0 20px 0 19px;
  white-space: nowrap;
}

.page-no,
.pct {
  height: 18px;
  background: #1d1d1d;
  text-align: center;
}

.page-no {
  width: 19px;
}

.pages {
  margin: 0 20px 0 4px;
}

.pct {
  width: 37px;
}

.pdf-bar .sep + button {
  margin-left: 12px;
}

.pdf-bar .pct {
  margin: 0 12px;
}

.pdf-bar .pct + button {
  margin-right: 12px;
}

.pdf-bar .sep + .fit {
  margin-left: 15px;
}

.pdf-bar .rotate {
  margin: 0 16px 0 13px;
}

.pdf-bar .sep + .draw {
  width: 26px;
  height: 26px;
  margin: 0 5px;
  border-radius: 50%;
  background: #6a6d70;
}

.pdf-bar .u {
  margin-right: 12px;
}

.pdf-right {
  margin-left: auto;
  display: flex;
  gap: 16px;
}

.viewer {
  flex: 1;
  min-height: 0;
  display: flex;
}

.page {
  flex: 1;
  min-width: 0;
  position: relative;
  overflow: hidden;
  padding: 0 88px 0 80px;
  background: #fff;
  border-right: 2px solid #111;
  color: #111;
  font-family: "Liberation Sans", Arial, sans-serif;
  font-size: 11px;
}

.line {
  display: flex;
  height: 13px;
  line-height: 13px;
  white-space: nowrap;
}

.page > .line:first-child {
  margin-top: -4px;
}

.line b {
  width: 18px;
  font-weight: normal;
}

.line em {
  font-style: normal;
  margin-left: auto;
}

/* visible half of a justified line */
.line .full {
  width: 166px;
  white-space: normal;
  text-align: justify;
  text-align-last: justify;
}

.line .mid {
  margin-right: 106px;
}

.sums {
  margin: 30px 42px 39px 0;
}

.line .short {
  margin-right: 118px;
}

.karnaugh {
  border-collapse: collapse;
  margin: 44px 0 0 177px;
}

.karnaugh td {
  width: 31px;
  height: 28px;
  padding: 0;
  border: 1px solid #222;
}

.q5 {
  margin-top: 27px;
}

.compare {
  border-collapse: collapse;
  table-layout: fixed;
  width: 100%;
  margin-top: 12px;
}

.c1 {
  width: 98px;
}

.c2 {
  width: 148px;
}

.compare td,
.compare th {
  border: 1px solid #333;
  padding: 0 5px;
  font-weight: normal;
  font-size: 12px;
  line-height: 13px;
  vertical-align: top;
  text-align: center;
}

.compare .mem th {
  height: 39px;
  text-align: justify;
  text-align-last: justify;
}

.compare .head td {
  height: 91px;
  padding-top: 1px;
}

.compare .head .spec {
  font-size: 9px;
  line-height: 11px;
  vertical-align: bottom;
  padding: 0;
  white-space: nowrap;
}

.mark {
  position: absolute;
  left: 0;
  top: 0;
  width: 624px;
  height: 550px;
  stroke: #cf3038;
  stroke-width: 2;
}

.annot {
  position: absolute;
  left: 218px;
  bottom: 0;
  width: 201px;
  height: 47px;
  display: flex;
  align-items: center;
  padding: 0 15px 0 12px;
  border-radius: 20px 20px 0 0;
  background: #282828;
  color: #d0d0d0;
}

.annot button {
  width: 34px;
  height: 26px;
}

.annot .on {
  width: 26px;
  margin-right: 4px;
  border-radius: 50%;
  background: #344a70;
}

.annot .sep {
  margin: 0 13px 0 8px;
}

.annot .sep + button {
  width: 26px;
  margin: 0 10px 0 0;
}

.annot .red {
  width: 18px;
  height: 18px;
  border-radius: 50%;
  background: #e03535;
}

/* ---------- Calculator ---------- */
.calculator {
  position: absolute;
  left: 746px;
  top: 135px;
  width: 267px;
  height: 422px;
  display: flex;
  flex-direction: column;
  padding: 0 3px 3px 2px;
  border: 1px solid #38303a;
  border-radius: 6px;
  background: linear-gradient(100deg, #201a27, #271929 55%, #24191d);
  color: #fff;
}

.calculator header {
  height: 26px;
  display: flex;
  align-items: center;
  padding-left: 11px;
  gap: 12px;
}

.calculator .win-btns {
  margin-right: -3px;
}

.calculator .win-btns button {
  width: 38px;
}

.mode {
  height: 40px;
  display: flex;
  align-items: center;
  gap: 12px;
  padding: 0 9px 0 10px;
}

.mode h1 {
  font-size: 15px;
  font-weight: 600;
}

.mode button {
  color: #cfc8d0;
}

.mode .pin {
  margin-left: 4px;
}

.mode .history {
  margin-left: auto;
}

.expr {
  text-align: right;
  padding-right: 12px;
  font-size: 11px;
  line-height: 20px;
  color: #9c949c;
}

.calculator output {
  text-align: right;
  padding-right: 7px;
  font-size: 36px;
  line-height: 52px;
  font-weight: 600;
}

.memory {
  display: grid;
  grid-template-columns: repeat(6, 1fr);
  height: 32px;
  padding-top: 3px;
}

.off {
  color: #71666f;
}

.keys {
  flex: 1;
  display: grid;
  grid-template-columns: repeat(4, 1fr);
  grid-template-rows: repeat(6, 1fr);
  gap: 2px;
}

.keys button {
  min-height: 0;
  border-radius: 4px;
  background: #3a2e38;
  font-size: 14px;
}

.keys .small {
  font-size: 11px;
}

.keys .num {
  background: #43353f;
}

.keys .sign {
  font-size: 20px;
  font-weight: 300;
  background: #3a2b31;
}

.keys .math {
  font: 14px "Liberation Serif", serif;
}

.keys sup,
.keys sub {
  font-size: 9px;
  line-height: 9px;
}

.keys sup {
  margin-bottom: 6px;
}

.keys sub {
  margin-top: 4px;
}

.root {
  border-top: 1px solid;
  line-height: 11px;
}

.keys .equals {
  background: #c587d0;
  color: #4b2456;
}

.cursor {
  position: absolute;
  left: 224px;
  top: 376px;
  width: 12px;
  height: 18px;
  stroke: none;
}

/* ---------- Taskbar ---------- */
.taskbar {
  height: 40px;
  flex: none;
  position: relative;
  display: flex;
  justify-content: center;
  background: linear-gradient(to right, #201d3e, #261a3b 30%, #301a2c 42%, #37201f 50%, #43131a 65%, #431417 80%, #2b181b);
}

.apps {
  display: flex;
  padding-right: 2px;
}

.apps button {
  width: 37px;
  position: relative;
}

.open::after {
  content: "";
  position: absolute;
  left: 16px;
  bottom: 4px;
  width: 5px;
  height: 2px;
  border-radius: 1px;
  background: #a09498;
}

.apps .current {
  background: #5a2731;
  border-radius: 4px;
  height: 34px;
  margin-top: 3px;
  width: 33px;
}

.current::after {
  left: 10px;
  bottom: 1px;
  width: 13px;
  background: #d596e0;
}

.badge {
  position: absolute;
  top: 7px;
  right: 1px;
  width: 12px;
  height: 12px;
  border-radius: 50%;
  background: #d8404c;
  font-size: 8px;
  line-height: 12px;
  text-align: center;
}

.blue {
  background: #4a62b5;
}

.rec {
  width: 9px;
  height: 9px;
  background: #f00808;
}

.tray {
  position: absolute;
  right: 16px;
  top: 0;
  height: 40px;
  display: flex;
  align-items: center;
  gap: 7px;
  line-height: 13px;
  color: #f0e8ea;
}

.up-chev {
  transform: rotate(180deg);
}

.mic {
  margin-left: 6px;
}

.lang {
  text-align: center;
  margin: 0 8px;
}

.tray time {
  text-align: right;
  margin-left: 6px;
}

/* ---------- Chat ---------- */
.chat {
  position: absolute;
  left: 5px;
  top: 496px;
  bottom: 0;
  width: 279px;
  overflow: hidden;
  border-radius: 3px;
  background: rgba(0, 0, 0, 0.35);
  font: 11px/13px "DejaVu Sans", sans-serif;
  color: #b4b4b4;
}

.chat ul {
  list-style: none;
  margin-top: -6px;
  padding-left: 1px;
  mix-blend-mode: screen;
}

.chat li {
  padding: 3px 0;
  white-space: nowrap;
}

.chat b {
  color: #b58428;
}

.chat .red b {
  color: #a83c44;
}

.chat .emote {
  height: 22px;
}

.emote svg {
  display: inline-block;
  width: 18px;
  height: 16px;
  vertical-align: middle;
  stroke: none;
}
```
